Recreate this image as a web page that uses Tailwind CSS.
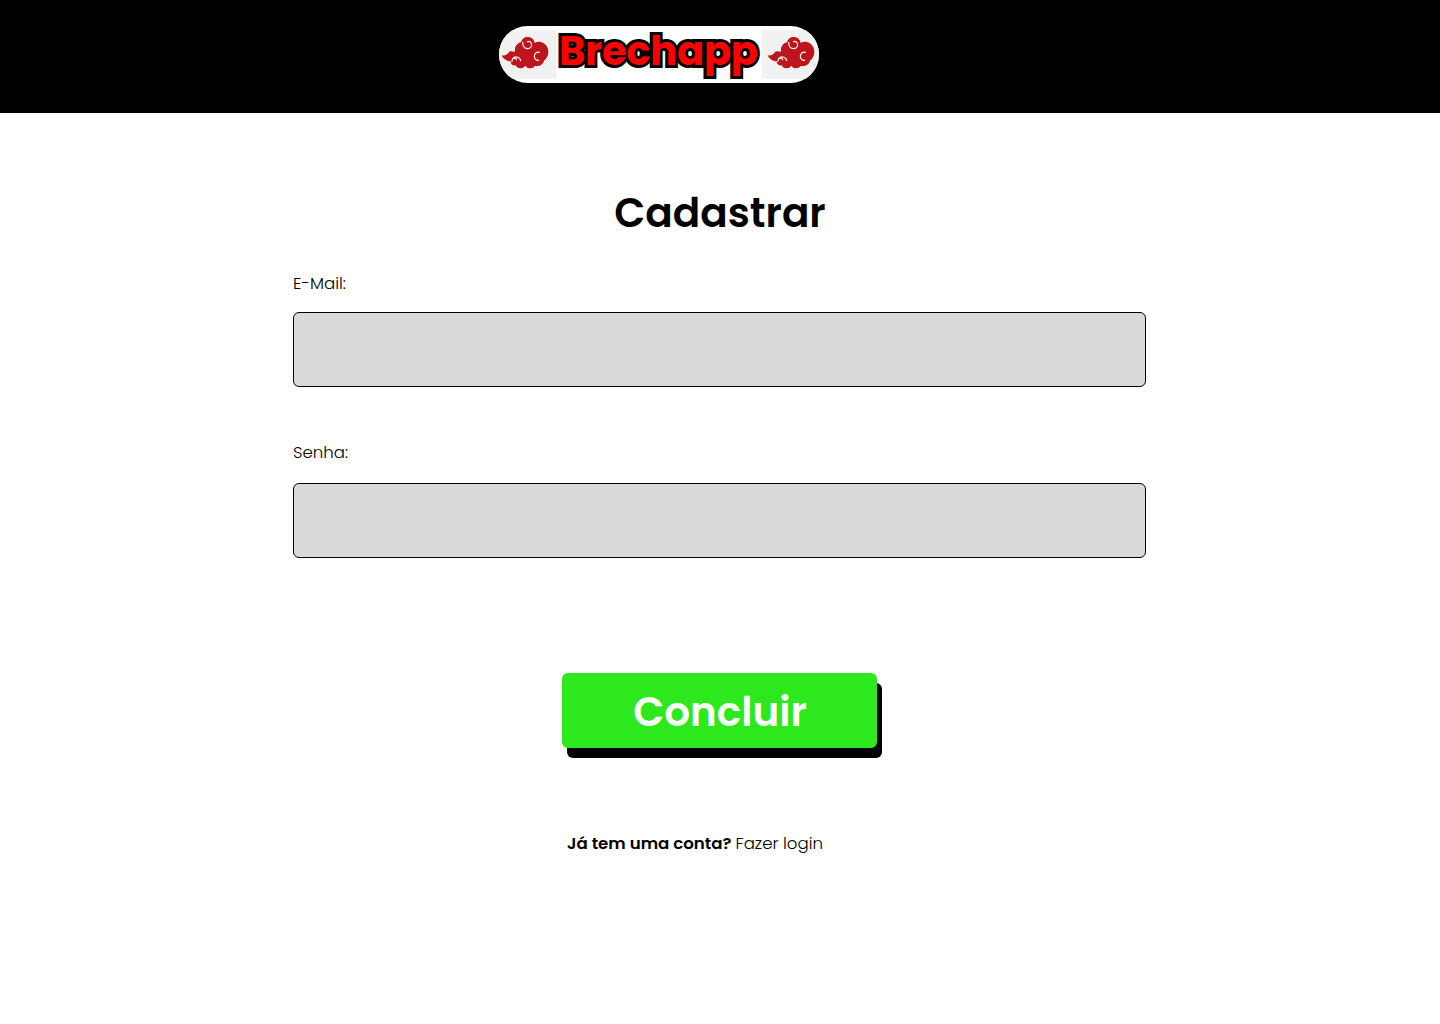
<!DOCTYPE html>
<html lang="pt-BR">
<head>
<meta charset="utf-8">
<title>Brechapp - Cadastrar</title>
<script src="https://cdn.jsdelivr.net/npm/@tailwindcss/browser@4"></script>
</head>
<body class="min-h-screen bg-white text-black font-[Poppins,Inter,sans-serif]">
<svg class="absolute size-0">
  <defs>
    <pattern id="checker" width="6" height="6" patternUnits="userSpaceOnUse"><rect width="6" height="6" fill="#fafafa"/><path d="M0 0h3v3H0zM3 3h3v3H3z" fill="#e9e9e9"/></pattern>
    <symbol id="cloud" viewBox="0 0 210 210" overflow="visible">
      <path fill="#bd151b" d="M20 106C30 109 37 103 43 95C47 92 53 94 60 95C58 81 66 69 78 67C80 57 88 51 98 51C110 51 118 59 119 69C133 60 153 69 158 84C163 98 158 115 147 122C144 134 133 140 119 138C113 147 97 147 91 137C83 148 66 147 62 136C54 138 46 133 48 124C36 125 24 116 20 106Z"/>
      <g fill="none" stroke="#f4f4f4" stroke-width="3.6" stroke-linecap="round"><path d="M83 67C83 79 89 86 98 86C107 86 112 78 109 70C107 65 101 63 97 65"/><path d="M133 97C125 95 118 101 118 109C118 117 124 122 131 121"/><path d="M51 124C51 114 58 110 66 111C73 112 76 117 77 122M57 116C61 113 65 116 65 119"/></g>
    </symbol>
  </defs>
</svg>
<header class="flex h-[113px] bg-black pt-[26px] pl-[499px]">
  <div class="flex h-[57px] w-80 items-center overflow-hidden rounded-full bg-white">
    <svg class="h-[49px] w-[57px] shrink-0" viewBox="12 30 171 147"><rect x="12" y="30" width="171" height="147" fill="url(#checker)"/><use href="#cloud" width="210" height="210"/></svg>
    <span class="w-[206px] shrink-0 pb-[7px] pl-[3px] text-[40px] leading-[50px] font-bold tracking-[-0.25px] text-[#f00] [-webkit-text-stroke:6px_#000] [paint-order:stroke_fill]">Brechapp</span>
    <svg class="h-[49px] w-[57px] shrink-0" viewBox="3 30 171 147"><rect x="3" y="30" width="171" height="147" fill="url(#checker)"/><use href="#cloud" width="210" height="210"/></svg>
  </div>
</header>
<main class="ml-[293px] flex w-[853px] flex-col">
  <h1 class="mt-[70px] h-[60px] pl-px text-center text-[40.5px] leading-[60px] font-semibold">Cadastrar</h1>
  <label for="email" class="mt-7 h-[41px] text-[16.6px] leading-[25px] font-light">E-Mail:</label>
  <input id="email" type="email" class="h-[75px] rounded-md border border-black bg-[#d9d9d9] px-4">
  <label for="senha" class="mt-[53px] h-[43px] text-[16.6px] leading-[25px] font-light">Senha:</label>
  <input id="senha" type="password" class="h-[75px] rounded-md border border-black bg-[#d9d9d9] px-4">
  <button class="mt-[115px] ml-[269px] h-[75px] w-[315px] rounded-md bg-[#2de81d] pt-0.5 pl-px text-[40.5px] leading-[73px] font-semibold text-white shadow-[5px_10px_0_#000]">Concluir</button>
  <p class="mt-[83px] ml-[274px] text-[16.6px] leading-[25px] font-light"><span class="font-semibold">Já tem uma conta?</span> <span class="-ml-[0.5px]">Fazer login</span></p>
</main>
</body>
</html>
